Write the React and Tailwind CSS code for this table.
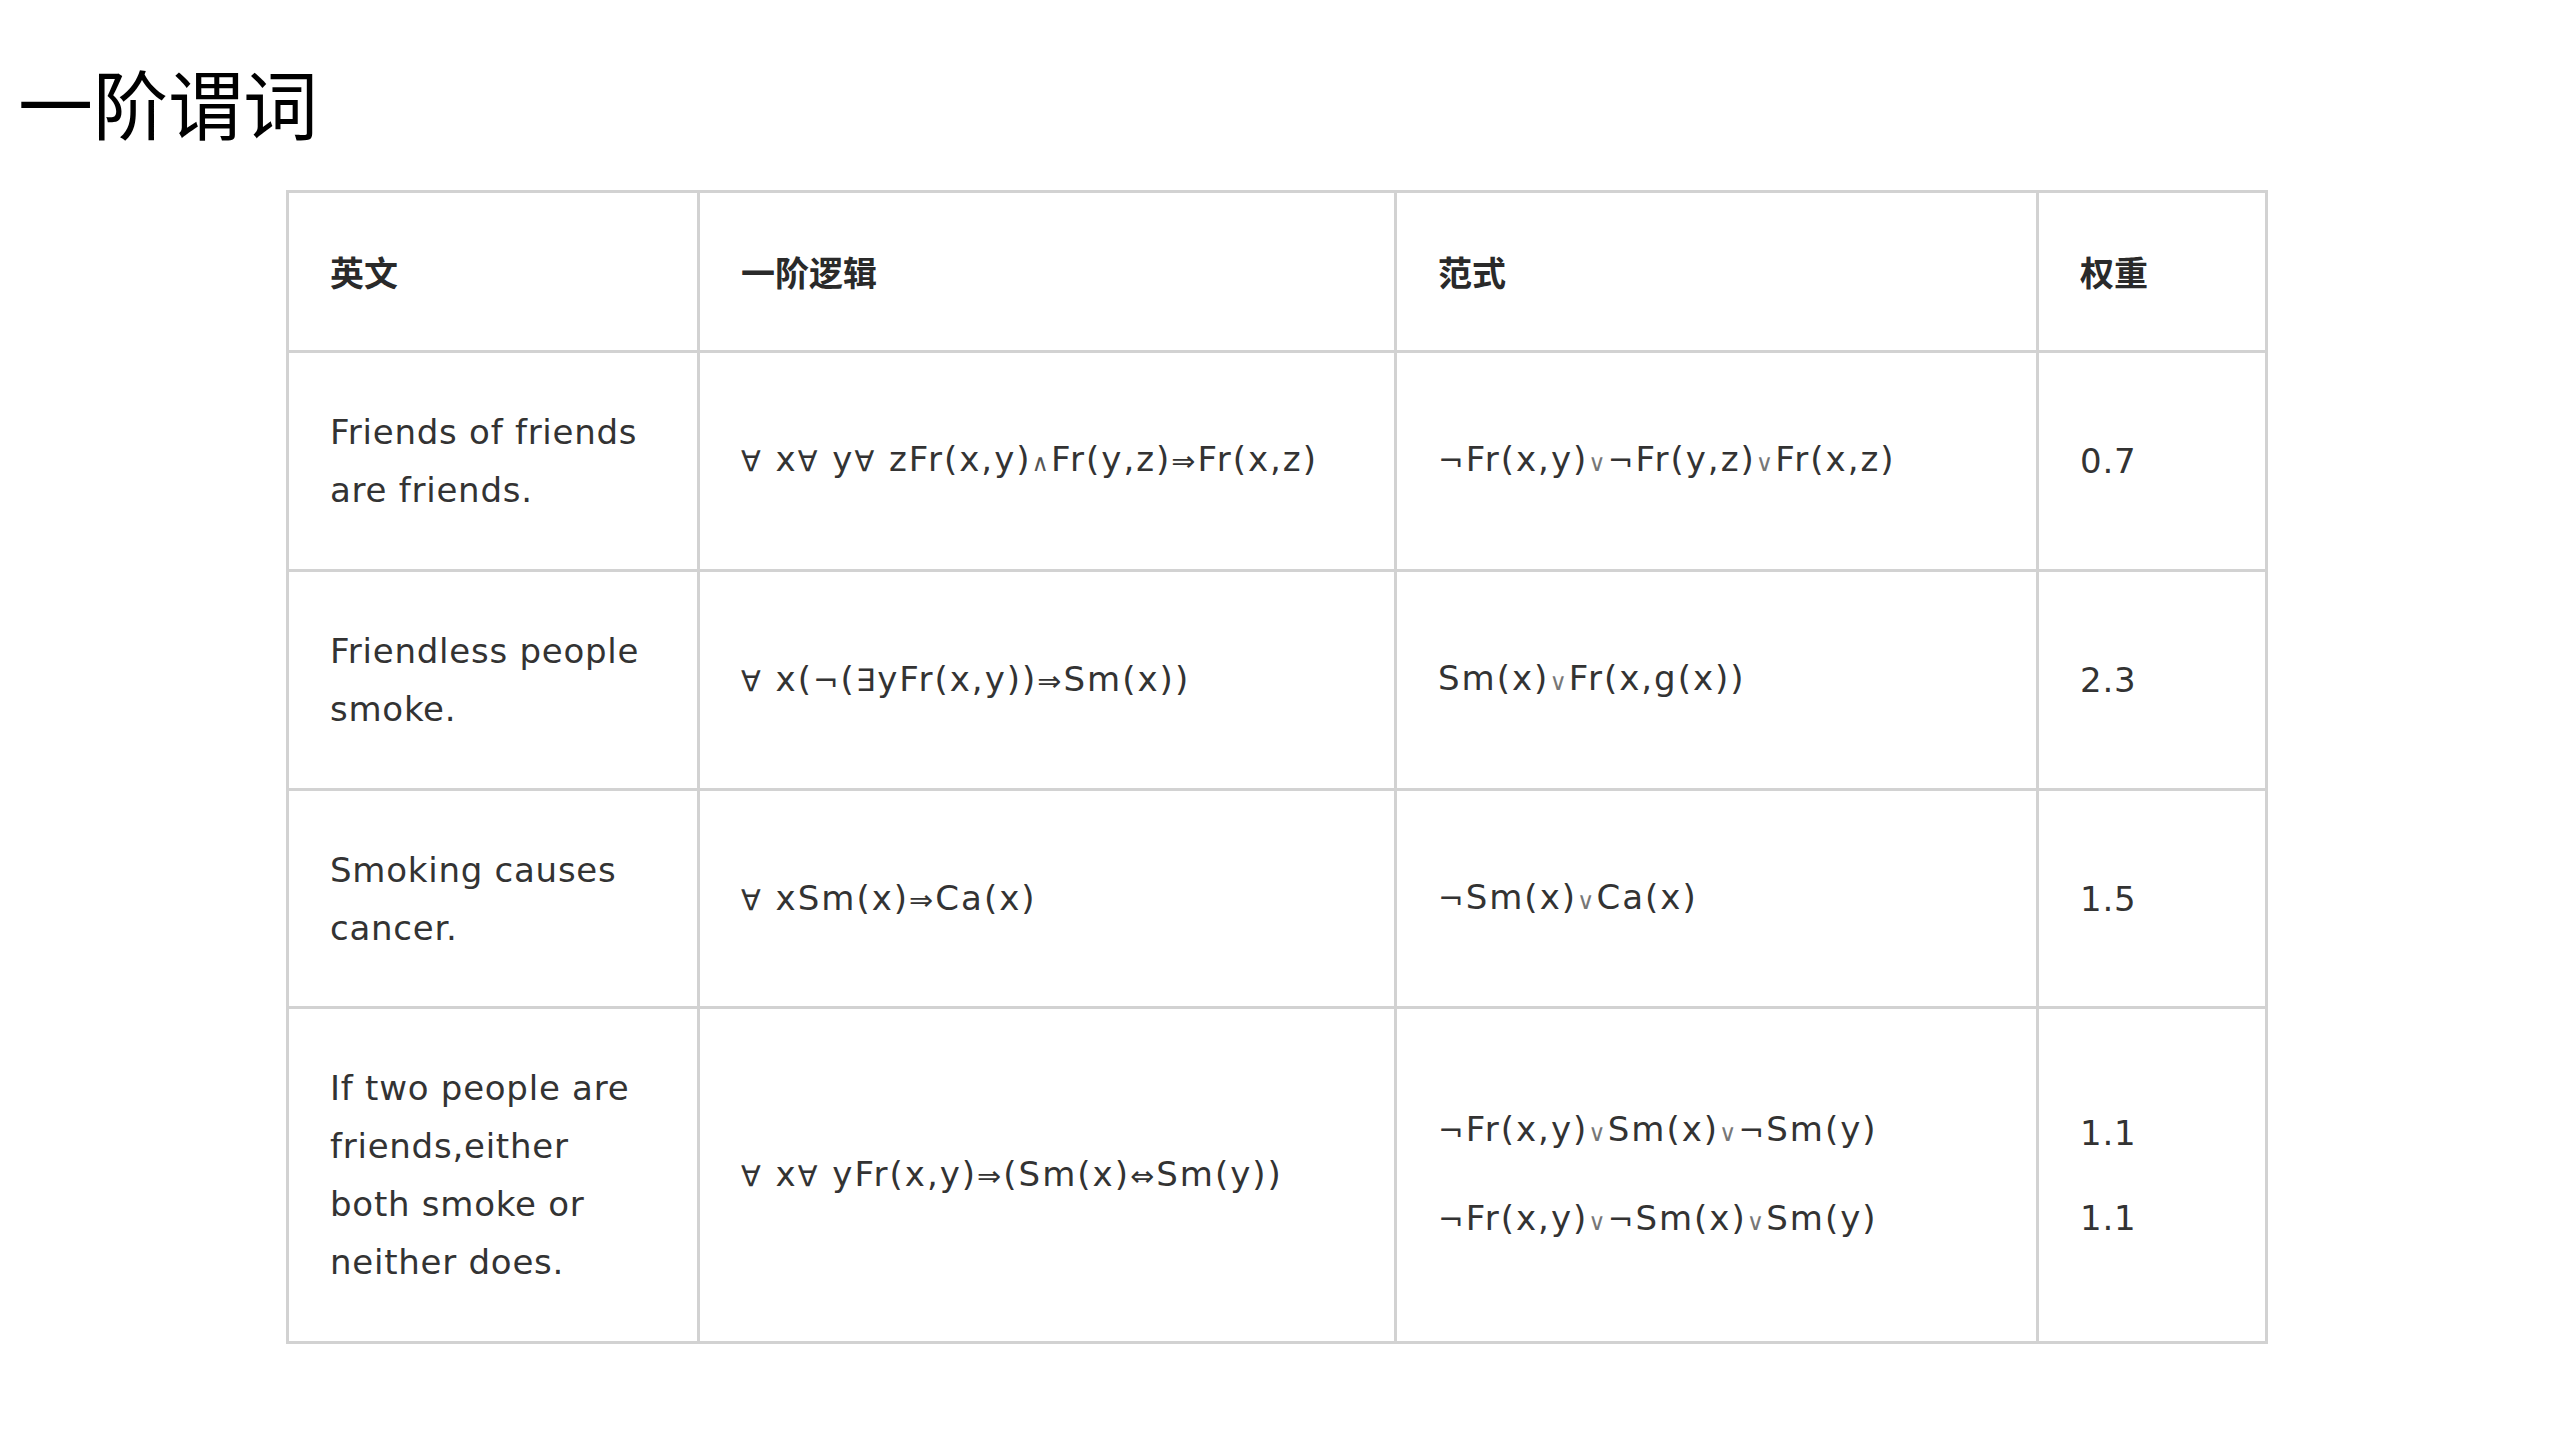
const SYMBOLS = {
  "∀": "text-[0.85em]",
  "∃": "text-[0.9em]",
  "∧": "text-[0.7em] text-[#555]",
  "∨": "text-[0.7em] text-[#777]",
  "¬": "text-[0.9em]",
  "⇒": "text-[0.85em]",
  "⇔": "text-[0.85em]",
};

function Formula({ text }) {
  return (
    <span className="tracking-[2px]">
      {Array.from(text).map((ch, i) =>
        SYMBOLS[ch] ? (
          <span key={i} className={SYMBOLS[ch]}>
            {ch}
          </span>
        ) : (
          ch
        )
      )}
    </span>
  );
}

const rows = [
  {
    en: ["Friends of friends", "are friends."],
    fol: "∀ x∀ y∀ zFr(x,y)∧Fr(y,z)⇒Fr(x,z)",
    cnf: ["¬Fr(x,y)∨¬Fr(y,z)∨Fr(x,z)"],
    w: ["0.7"],
    h: "h-[219px]",
  },
  {
    en: ["Friendless people", "smoke."],
    fol: "∀ x(¬(∃yFr(x,y))⇒Sm(x))",
    cnf: ["Sm(x)∨Fr(x,g(x))"],
    w: ["2.3"],
    h: "h-[219px]",
  },
  {
    en: ["Smoking causes", "cancer."],
    fol: "∀ xSm(x)⇒Ca(x)",
    cnf: ["¬Sm(x)∨Ca(x)"],
    w: ["1.5"],
    h: "h-[218px]",
  },
  {
    en: ["If two people are", "friends,either", "both smoke or", "neither does."],
    fol: "∀ x∀ yFr(x,y)⇒(Sm(x)⇔Sm(y))",
    cnf: ["¬Fr(x,y)∨Sm(x)∨¬Sm(y)", "¬Fr(x,y)∨¬Sm(x)∨Sm(y)"],
    w: ["1.1", "1.1"],
    h: "h-[335px]",
  },
];

function Cell({ children, className = "" }) {
  return (
    <div
      className={`flex flex-col justify-center pl-[41px] border-r-[3px] border-b-[3px] border-[#d2d2d2] ${className}`}
    >
      {children}
    </div>
  );
}

export default function App() {
  return (
    <div className="w-[2560px] h-[1440px] bg-white overflow-hidden">
      <h1 className="pt-[64px] pl-[18px] text-[75px] leading-none font-normal text-black font-['Noto_Sans_CJK_SC','Noto_Sans',sans-serif]">
        一阶谓词
      </h1>

      <div className="ml-[286px] mt-[51px] w-[1982px] grid grid-cols-[411px_697px_642px_229px] border-l-[3px] border-t-[3px] border-[#d2d2d2] text-[#333] text-[34px] leading-[58px] tracking-[0.75px] font-['DejaVu_Sans','Noto_Sans_CJK_SC',sans-serif]">
        {["英文", "一阶逻辑", "范式", "权重"].map((t) => (
          <Cell key={t} className="h-[160px]">
            <span className="text-[34px] font-semibold tracking-normal text-[#2a2a2a] font-['Noto_Sans_CJK_SC',sans-serif]">
              {t}
            </span>
          </Cell>
        ))}

        {rows.map((r, i) => (
          <div key={i} className="contents">
            <Cell className={r.h}>
              {r.en.map((l) => (
                <div key={l}>{l}</div>
              ))}
            </Cell>
            <Cell className={r.h}>
              <Formula text={r.fol} />
            </Cell>
            <Cell className={r.h}>
              <div className="flex flex-col gap-[27px]">
                {r.cnf.map((c, j) => (
                  <Formula key={j} text={c} />
                ))}
              </div>
            </Cell>
            <Cell className={r.h}>
              <div className="flex flex-col gap-[27px]">
                {r.w.map((v, j) => (
                  <div key={j}>{v}</div>
                ))}
              </div>
            </Cell>
          </div>
        ))}
      </div>
    </div>
  );
}
